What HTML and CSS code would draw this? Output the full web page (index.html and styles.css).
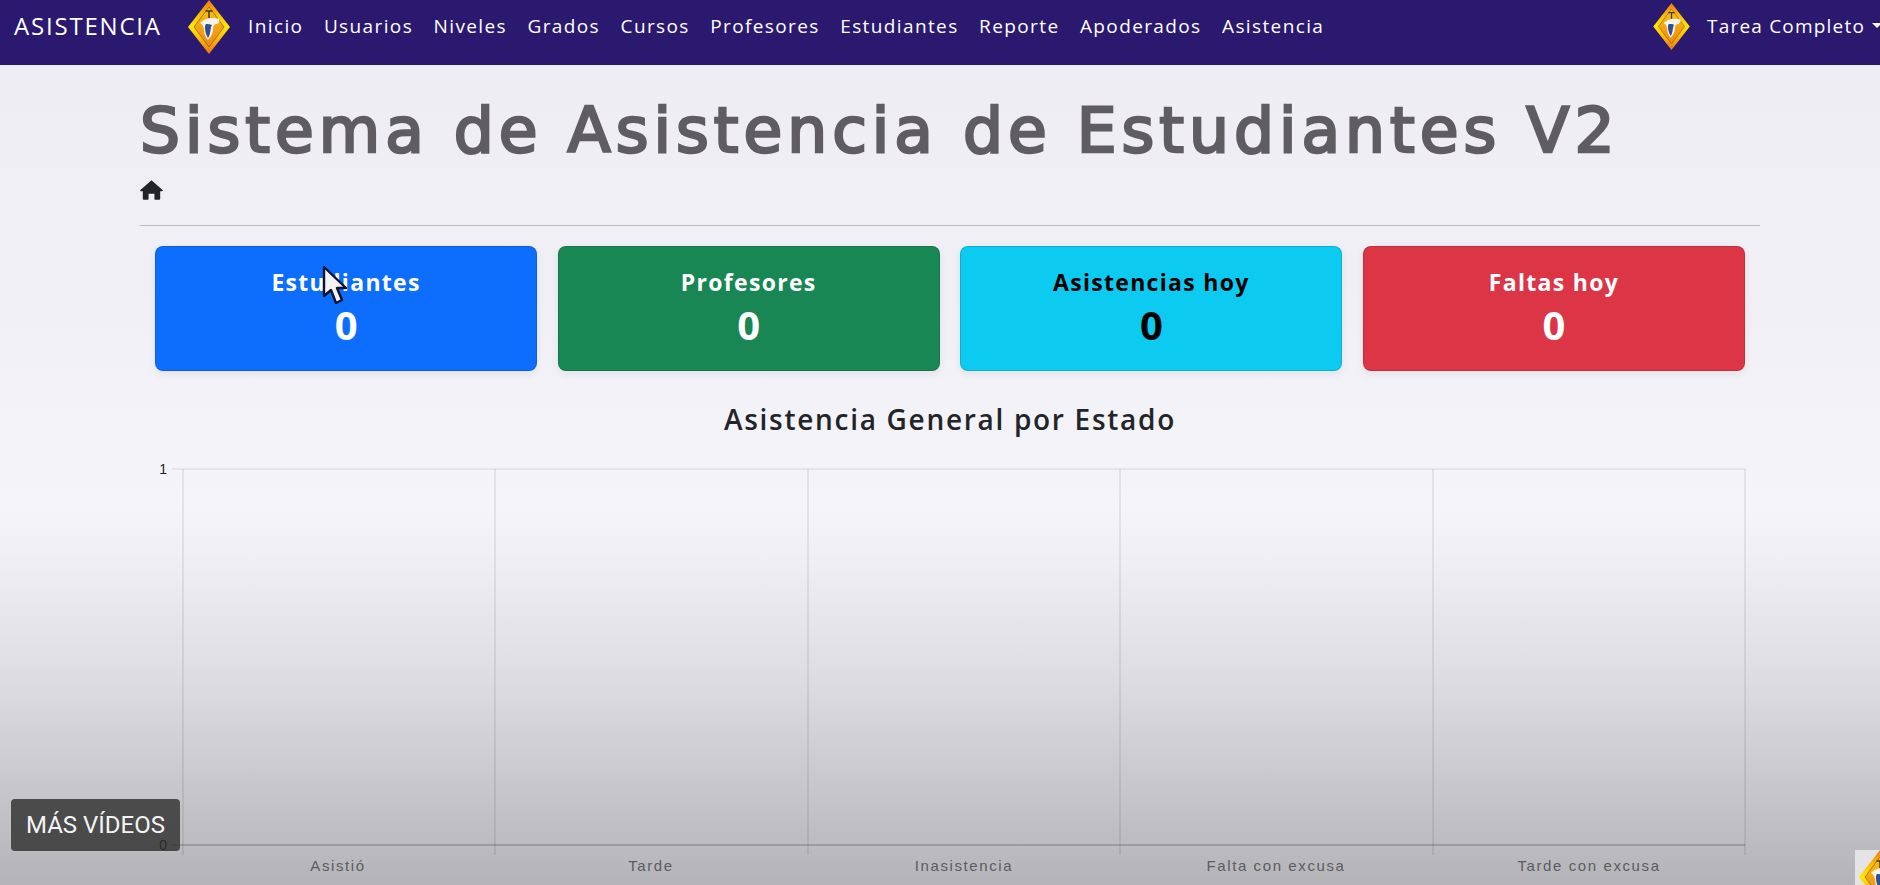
FILE: index.html
```html
<!DOCTYPE html>
<html lang="es">
<head>
<meta charset="utf-8">
<title>Sistema de Asistencia de Estudiantes V2</title>
<link rel="stylesheet" href="styles.css">
</head>
<body>
<svg class="defs" width="0" height="0" aria-hidden="true">
  <defs>
    <linearGradient id="gold" x1="0" y1="0" x2="0" y2="1">
      <stop offset="0" stop-color="#ee7a14"/>
      <stop offset="0.3" stop-color="#f9c40a"/>
      <stop offset="0.5" stop-color="#fde805"/>
      <stop offset="0.72" stop-color="#f9b80c"/>
      <stop offset="1" stop-color="#ec7414"/>
    </linearGradient>
    <linearGradient id="inner" x1="0" y1="0" x2="0" y2="1">
      <stop offset="0" stop-color="#f7c518"/>
      <stop offset="1" stop-color="#ef8612"/>
    </linearGradient>
    <symbol id="logo" viewBox="0 0 42 54">
      <polygon points="21,0 42,27 21,54 0,27" fill="url(#gold)"/>
      <polygon points="21,7 36,27 21,47 6,27" fill="url(#inner)" stroke="#8a5a10" stroke-width="0.7"/>
      <path d="M17.5 11h7M21 11v7" stroke="#4a3220" stroke-width="1.5" fill="none"/>
      <path d="M12 23c5-5 12-6 19-4 1 2 0 4-2 5-3 0-4 2-4 5 0 4-2 8-5 11-2-2-4-6-4-10 0-3-1-5-4-7z" fill="#f6f3ec"/>
      <path d="M18 24c2 0 4 0 6 1-2 3-1 9-4 13-2-3-3-7-3-10 0-2 0-3 1-4z" fill="#30508f"/>
    </symbol>
  </defs>
</svg>

<nav class="navbar">
  <a class="brand">ASISTENCIA</a>
  <svg class="logo" width="42" height="54"><use href="#logo"/></svg>
  <ul class="menu">
    <li>Inicio</li>
    <li>Usuarios</li>
    <li>Niveles</li>
    <li>Grados</li>
    <li>Cursos</li>
    <li>Profesores</li>
    <li>Estudiantes</li>
    <li>Reporte</li>
    <li>Apoderados</li>
    <li>Asistencia</li>
  </ul>
  <div class="user">
    <svg class="logo-small" width="37" height="47"><use href="#logo"/></svg>
    <span class="user-name">Tarea Completo</span>
    <span class="caret"></span>
  </div>
</nav>

<main class="page">
  <h1 class="title">Sistema de Asistencia de Estudiantes V2</h1>
  <div class="crumb">
    <svg width="23" height="20" viewBox="0 0 23 20"><path d="M11.5 0.2 22.6 10c.5.5.2 1.3-.5 1.3h-1.9v7.4c0 .7-.5 1.1-1.1 1.1h-3.7c-.6 0-1-.5-1-1.1v-5H8.6v5c0 .6-.4 1.1-1 1.1H3.9c-.6 0-1.1-.4-1.1-1.1v-7.4H.9c-.7 0-1-.8-.5-1.3z" fill="#212529"/></svg>
  </div>
  <hr class="rule">
  <section class="cards">
    <article class="card card-blue"><h2>Estudiantes</h2><p>0</p></article>
    <article class="card card-green"><h2>Profesores</h2><p>0</p></article>
    <article class="card card-cyan"><h2>Asistencias hoy</h2><p>0</p></article>
    <article class="card card-red"><h2>Faltas hoy</h2><p>0</p></article>
  </section>
  <h3 class="chart-title">Asistencia General por Estado</h3>
  <svg class="chart" width="1620" height="420" viewBox="0 0 1620 420">
    <g class="grid">
      <path d="M43 10V396M355 10V396M668 10V396M980 10V396M1293 10V396M1605 10V396"/>
      <path d="M32 10H1605"/>
    </g>
    <path class="axis" d="M32 386H1605"/>
    <text class="ytick" x="27" y="15">1</text>
    <text class="ytick" x="27" y="391">0</text>
    <text class="xtick" x="198" y="412">Asistió</text>
    <text class="xtick" x="511" y="412">Tarde</text>
    <text class="xtick" x="824" y="412">Inasistencia</text>
    <text class="xtick" x="1136" y="412">Falta con excusa</text>
    <text class="xtick" x="1449" y="412">Tarde con excusa</text>
  </svg>
</main>

<svg class="cursor" width="28" height="42" viewBox="0 0 28 42"><path d="M3 2 3 31 10 25 15 38 21 35 16 23 25 23z" fill="#f4f2f2" stroke="#0c1230" stroke-width="2.4" stroke-linejoin="round"/></svg>
<div class="more-videos">MÁS VÍDEOS</div>
<div class="thumb"><svg width="42" height="54"><use href="#logo"/></svg></div>
</body>
</html>
```
FILE: styles.css
```css
* { box-sizing: border-box; }
html, body { margin: 0; height: 885px; overflow: hidden; }
body {
  position: relative;
  font-family: "Open Sans", "Noto Sans", sans-serif;
  color: #212529;
  background: linear-gradient(180deg, #eeedf4 65px, #f1f0f6 300px, #f5f4f9 510px, #eeeef2 570px, #dcdce1 680px, #c6c6cb 790px, #b4b4b8 885px);
}
.defs { position: absolute; }

.navbar {
  display: flex;
  align-items: center;
  height: 65px;
  padding: 0 0 14px 14px;
  background: #2a196e;
  color: #fff;
  white-space: nowrap;
}
.brand { font-size: 24px; letter-spacing: 1.8px; width: 147px; }
.logo { margin-left: 27px; align-self: flex-start; flex: none; }
.logo-small { flex: none; margin: 2px 17px 0 0; }
.menu {
  display: flex;
  gap: 20.5px;
  margin: 0 0 0 18px;
  padding: 0;
  list-style: none;
  font-size: 19px;
  letter-spacing: 1.38px;
}
.user { display: flex; align-items: center; margin-left: auto; flex: none; width: 227px; }
.user-name { font-size: 19px; letter-spacing: 1.2px; }
.caret {
  margin-left: 7px;
  border-top: 5px solid #fff;
  border-left: 5px solid transparent;
  border-right: 5px solid transparent;
}

.page { width: 1620px; margin-left: 140px; }
.title {
  margin: 30px 0 0;
  font-family: "DejaVu Sans", sans-serif;
  font-size: 63px;
  font-weight: 400;
  line-height: 72px;
  letter-spacing: 5px;
  color: #5f5d62;
  -webkit-text-stroke: 2.6px #5f5d62;
  white-space: nowrap;
}
.crumb { height: 20px; margin-top: 13px; }
.crumb svg { display: block; }
.rule { height: 1px; margin: 25px 0 0; border: 0; background: #bdbcc6; }
.cards { display: flex; gap: 20.5px; padding: 0 15px; margin-top: 20px; }
.card {
  flex: 1;
  height: 125px;
  padding-top: 18px;
  border-radius: 8px;
  border: 1px solid rgba(0,0,0,.12);
  box-shadow: 0 3px 8px rgba(0,0,0,.07);
  text-align: center;
  color: #fff;
}
.card h2 { margin: 0; font-size: 23px; line-height: 34px; font-weight: 700; letter-spacing: 1.3px; }
.card p { margin: 1px 0 0; font-size: 40px; line-height: 50px; font-weight: 700; }
.card-blue { background: #0d6efd; }
.card-green { background: #198754; }
.card-cyan { background: #0dcaf0; color: #000; }
.card-red { background: #dc3545; }

.chart-title {
  margin: 29px 0 0;
  text-align: center;
  font-size: 28px;
  line-height: 38px;
  font-weight: 600;
  letter-spacing: 1.7px;
  color: #212529;
}
.chart { display: block; margin-top: 21px; }
.grid path { fill: none; stroke: rgba(0,0,0,.12); stroke-width: 1.2; }
.axis { fill: none; stroke: rgba(0,0,0,.22); stroke-width: 1.4; }
.ytick, .xtick { font-family: "Liberation Sans", Arial, sans-serif; }
.ytick { font-size: 14px; fill: #222226; text-anchor: end; }
.xtick { font-size: 15px; fill: #5c5c60; text-anchor: middle; letter-spacing: 1.6px; }

.cursor { position: absolute; left: 321px; top: 265px; }
.more-videos {
  position: absolute;
  left: 11px;
  top: 799px;
  width: 169px;
  height: 52px;
  border-radius: 4px;
  background: rgba(45,45,45,.8);
  color: #f4f4f4;
  font-family: Roboto, sans-serif;
  font-size: 24px;
  line-height: 52px;
  text-align: center;
}
.thumb {
  position: absolute;
  left: 1855px;
  top: 850px;
  width: 25px;
  height: 35px;
  overflow: hidden;
  background: #e4e4e4;
  padding: 0 0 0 4px;
}
.thumb svg { display: block; }
```
